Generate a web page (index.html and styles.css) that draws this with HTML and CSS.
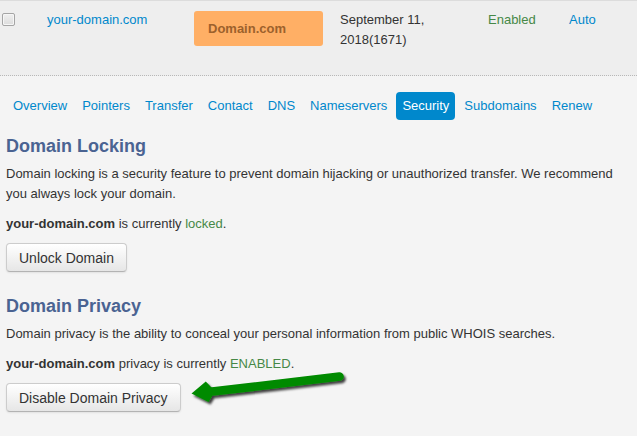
FILE: index.html
```html
<!DOCTYPE html>
<html>
<head>
<meta charset="utf-8">
<link rel="stylesheet" href="styles.css">
</head>
<body>
<div class="row">
  <div class="cell cell-check"><span class="checkbox"></span></div>
  <div class="cell"><a class="link" href="#">your-domain.com</a></div>
  <div class="cell"><span class="badge">Domain.com</span></div>
  <div class="cell date">September 11,<br>2018(1671)</div>
  <div class="cell status-ok">Enabled</div>
  <div class="cell"><a class="link" href="#">Auto</a></div>
</div>

<nav class="tabs">
  <a class="tab" href="#">Overview</a>
  <a class="tab" href="#">Pointers</a>
  <a class="tab" href="#">Transfer</a>
  <a class="tab" href="#">Contact</a>
  <a class="tab" href="#">DNS</a>
  <a class="tab" href="#">Nameservers</a>
  <a class="tab active" href="#">Security</a>
  <a class="tab" href="#">Subdomains</a>
  <a class="tab" href="#">Renew</a>
</nav>

<main class="content">
  <section class="section first">
    <h2 class="heading">Domain Locking</h2>
    <p class="desc">Domain locking is a security feature to prevent domain hijacking or unauthorized transfer. We recommend you always lock your domain.</p>
    <p class="state"><b>your-domain.com</b> is currently <span class="ok">locked</span>.</p>
    <button class="btn">Unlock Domain</button>
  </section>
  <section class="section">
    <h2 class="heading">Domain Privacy</h2>
    <p class="desc">Domain privacy is the ability to conceal your personal information from public WHOIS searches.</p>
    <p class="state"><b>your-domain.com</b> privacy is currently <span class="ok">ENABLED</span>.</p>
    <button class="btn">Disable Domain Privacy</button>
  </section>
</main>

<svg class="arrow" width="170" height="45" viewBox="185 365 170 45" xmlns="http://www.w3.org/2000/svg">
  <defs>
    <filter id="sh" x="-10%" y="-30%" width="130%" height="180%">
      <feDropShadow dx="2" dy="2.5" stdDeviation="1.3" flood-color="#000" flood-opacity="0.75"/>
    </filter>
  </defs>
  <g filter="url(#sh)" fill="#038a03" stroke="none">
    <line x1="210" y1="391.8" x2="339.5" y2="376.6" stroke="#038a03" stroke-width="8.6" stroke-linecap="round"/>
    <polygon points="191.5,393.6 205.8,381.6 211.5,387.6 212,396.6 208.5,402"/>
  </g>
</svg>
</body>
</html>
```

FILE: styles.css
```css
html, body {
  margin: 0;
  padding: 0;
}
body {
  position: relative;
  background: #f4f4f4;
  font-family: "Liberation Sans", Arial, sans-serif;
  font-size: 13px;
  line-height: 20px;
  color: #333;
  width: 637px;
  height: 436px;
  overflow: hidden;
}

.row {
  display: grid;
  grid-template-columns: 47px 147px 146px 148px 81px 1fr;
  height: 74px;
  background: #eeeeee;
  border-top: 1px solid #dcdcdc;
  border-bottom: 1px dotted #b8b8b8;
}
.cell {
  padding-top: 9px;
}
.cell-check {
  padding-top: 12px;
  padding-left: 2px;
}
.checkbox {
  display: block;
  width: 11px;
  height: 11px;
  border: 1px solid #a5a5a5;
  border-radius: 2px;
  background: linear-gradient(#f0f0f0, #dcdcdc);
  box-shadow: inset 0 0 0 1px #f6f6f6;
}
.link {
  color: #0088cc;
  text-decoration: none;
}
.badge {
  display: block;
  box-sizing: border-box;
  width: 129px;
  height: 35px;
  margin-top: 1px;
  padding: 8px 14px 0;
  background: #ffaf65;
  border-radius: 3px;
  color: #9c612c;
  font-weight: bold;
  font-size: 13px;
}
.date {
  color: #333;
}
.status-ok {
  color: #468847;
}

.tabs {
  display: flex;
  gap: 3px;
  margin-top: 16px;
  padding-left: 7px;
}
.tab {
  padding: 5px 6px;
  line-height: 18px;
  color: #0088cc;
  text-decoration: none;
  border-radius: 4px;
}
.tab.active {
  background: #0088cc;
  color: #fff;
}

.content {
  padding: 0 6px;
}
.section {
  margin-top: 23px;
}
.section.first {
  margin-top: 15px;
}
.heading {
  margin: 0 0 7px;
  font-size: 18px;
  line-height: 22px;
  font-weight: bold;
  color: #4a6392;
}
.desc {
  margin: 0 0 10px;
}
.state {
  margin: 0 0 9px;
}
.state b {
  color: #333;
}
.ok {
  color: #468847;
}
.btn {
  display: block;
  font-family: "Liberation Sans", Arial, sans-serif;
  font-size: 14px;
  line-height: 20px;
  color: #333;
  padding: 4px 12px 3px;
  border: 1px solid #cccccc;
  border-bottom-color: #b3b3b3;
  border-radius: 4px;
  background: linear-gradient(#ffffff, #e6e6e6);
  box-shadow: inset 0 1px 0 rgba(255,255,255,0.2), 0 1px 2px rgba(0,0,0,0.08);
}

.arrow {
  position: absolute;
  left: 185px;
  top: 365px;
}
```
